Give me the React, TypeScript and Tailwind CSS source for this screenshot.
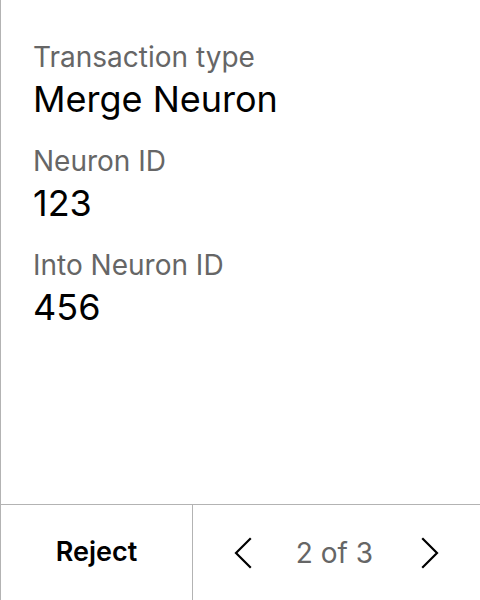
type Field = {
  label: string
  value: string
}

const fields: Field[] = [
  { label: 'Transaction type', value: 'Merge Neuron' },
  { label: 'Neuron ID', value: '123' },
  { label: 'Into Neuron ID', value: '456' },
]

function Chevron({ dir }: { dir: 'left' | 'right' }) {
  return (
    <svg width="18" height="32" viewBox="0 0 18 32" fill="none" stroke="#000" strokeWidth="2.2" strokeLinecap="square">
      {dir === 'left'
        ? <polyline points="16,2 2,16 16,30" />
        : <polyline points="2,2 16,16 2,30" />}
    </svg>
  )
}

export default function App() {
  return (
    <div className="w-[480px] h-[600px] flex flex-col bg-white border-l border-[#b3b3b3] font-['Inter','Noto_Sans',sans-serif]">
      <div className="flex-1 flex flex-col gap-[26px] pt-[41px] pl-8">
        {fields.map(f => (
          <div key={f.label} className="flex flex-col">
            <span className="text-[28px] leading-[32px] text-[#666]">{f.label}</span>
            <span className="mt-[6px] text-[36px] leading-[40px] text-black">{f.value}</span>
          </div>
        ))}
      </div>

      <div className="h-24 flex border-t border-[#b3b3b3]">
        <button className="w-[192px] h-full flex items-center justify-center border-r border-[#b3b3b3] text-[27px] font-semibold text-black">
          Reject
        </button>
        <div className="flex-1 flex items-center justify-between pl-[41px] pr-[41px]">
          <button className="flex items-center">
            <Chevron dir="left" />
          </button>
          <span className="text-[28px] text-[#666] mr-1">2 of 3</span>
          <button className="flex items-center">
            <Chevron dir="right" />
          </button>
        </div>
      </div>
    </div>
  )
}
